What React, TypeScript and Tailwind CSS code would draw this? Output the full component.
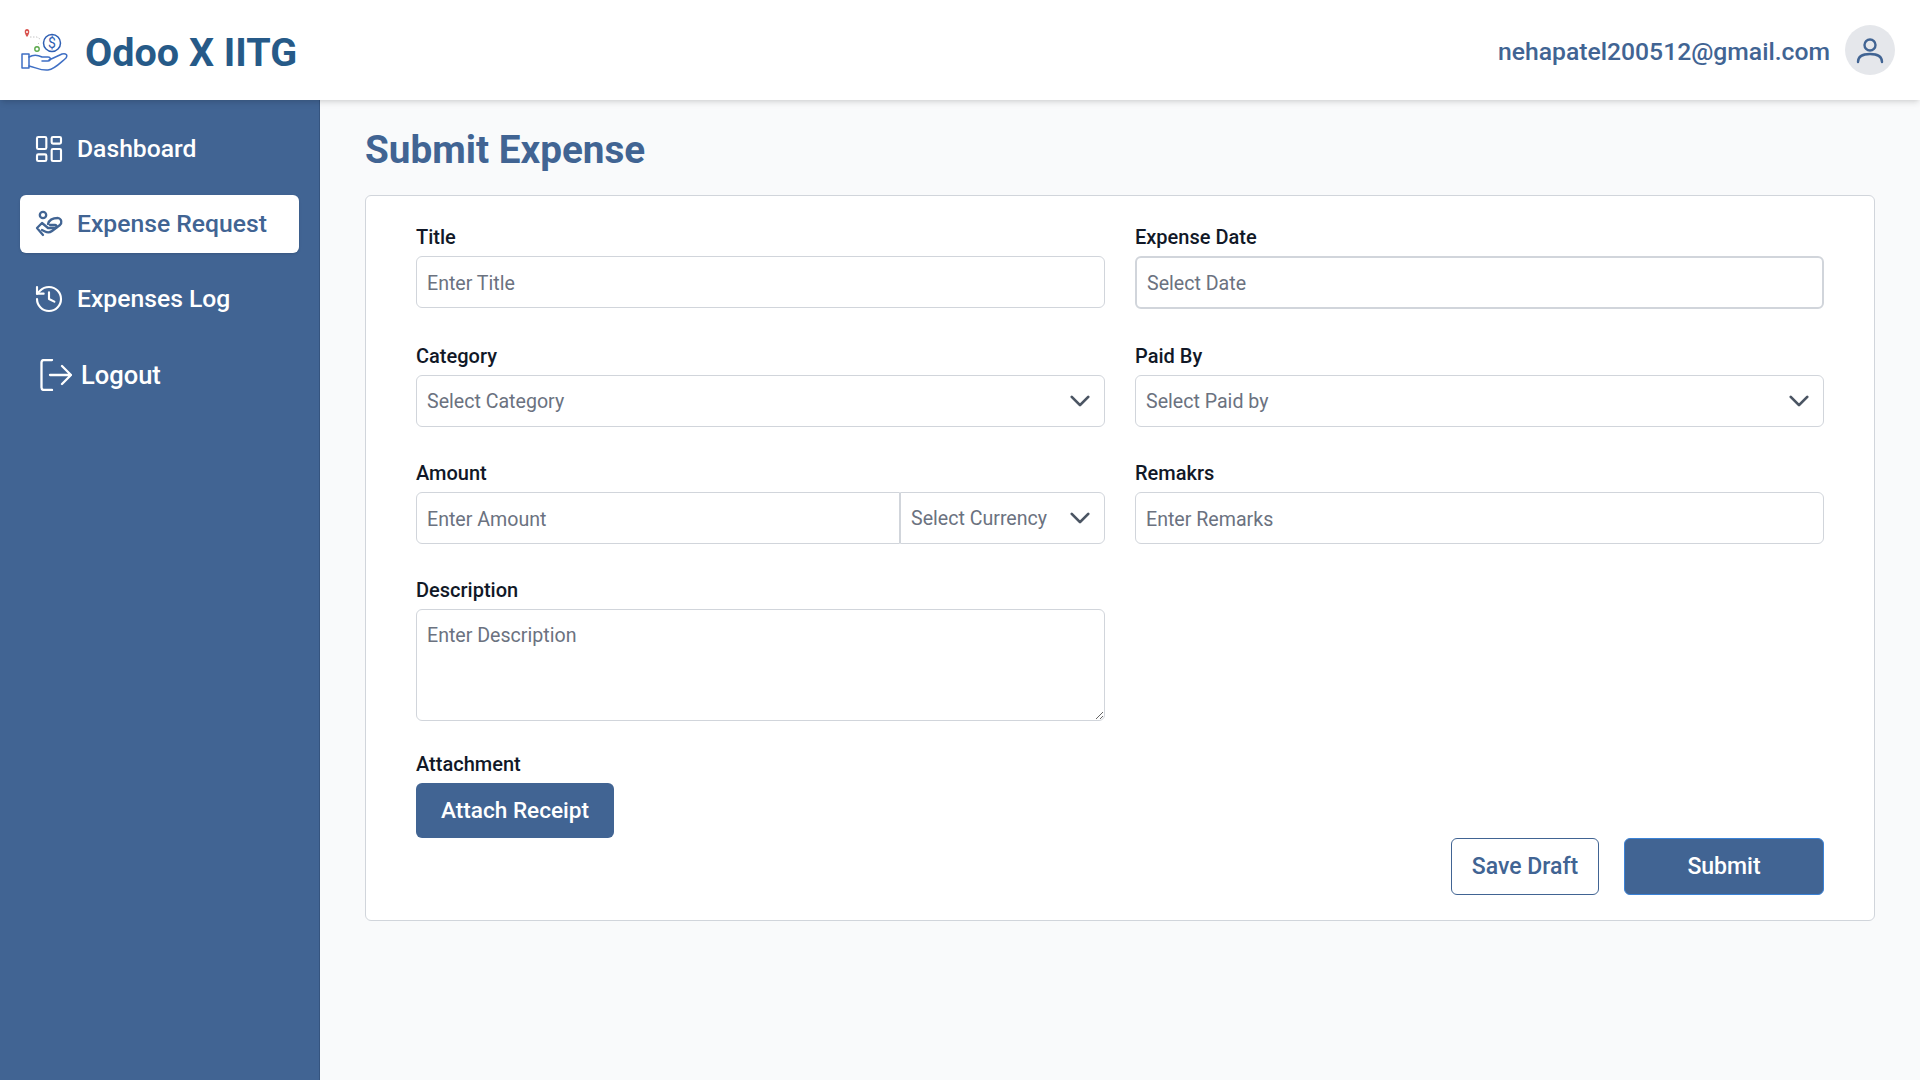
import { History, LayoutDashboard } from 'lucide-react';

const font = { fontFamily: 'Roboto, sans-serif' };

function Logo() {
  return (
    <svg width="48" height="44" viewBox="0 0 48 44" fill="none">
      <path d="M7 9 C4 5.500 4 1 7 1 C10 1 10 5.500 7 9Z" fill="#d9534f" />
      <circle cx="7" cy="4" r="1" fill="#fff" />
      <path d="M10 9 H17 L20 11 M19 15 L17 17" stroke="#b5b5b5" strokeWidth="0.8" strokeDasharray="1.500 1.500" />
      <circle cx="32" cy="15" r="8.500" stroke="#2f5fb3" strokeWidth="1.500" />
      <text x="32" y="20" fontSize="14" fill="#2f5fb3" textAnchor="middle" fontFamily="Roboto">$</text>
      <circle cx="17" cy="21" r="2.200" stroke="#5aa84a" strokeWidth="1.400" />
      <path d="M2 26 H9 V40 H2Z" stroke="#3f6fc4" strokeWidth="1.500" strokeLinejoin="round" />
      <path d="M9 29 C14 26 18 27 22 29 H28 C31 29 31 33 28 33 H22 M29 32 L42 26 C46 25 48 27 46 30 C40 35 35 41 28 42 C21 43 15 39 9 38" stroke="#3f6fc4" strokeWidth="1.500" strokeLinecap="round" strokeLinejoin="round" />
    </svg>
  );
}

function HandIcon() {
  return (
    <svg width="32" height="32" viewBox="0 0 32 32" fill="none" stroke="currentColor" strokeWidth="2.300" strokeLinecap="round" strokeLinejoin="round">
      <circle cx="10" cy="7" r="3.200" />
      <path d="M15 16 C16 12 20 10 25 10 C29 11 29 15 27 17 L19 23 C17 24.500 14 24.500 12 23.500 L9 22" />
      <path d="M17 17 H22 C24 17 24 20 22 20 H15 L9 15 L4 20 L10 27" />
    </svg>
  );
}

function LogoutIcon() {
  return (
    <svg width="32" height="32" viewBox="0 0 32 32" fill="none" stroke="currentColor" strokeWidth="2.300" strokeLinecap="round" strokeLinejoin="round">
      <path d="M12 1 H4 C2.500 1 1.500 2 1.500 3.500 V28.500 C1.500 30 2.500 31 4 31 H12" />
      <path d="M10 16 H31 M22 7 L31 16 L22 25" />
    </svg>
  );
}

function UserIcon() {
  return (
    <svg width="32" height="32" viewBox="0 0 32 32" fill="none" stroke="currentColor" strokeWidth="2.400" strokeLinecap="round">
      <circle cx="16" cy="11" r="5.500" />
      <path d="M4 28 C4 22 9 20 16 20 C23 20 28 22 28 28" />
    </svg>
  );
}

function Chevron() {
  return (
    <svg width="22" height="22" viewBox="0 0 16 16" fill="none" stroke="#4b5563" strokeWidth="2" strokeLinecap="round" strokeLinejoin="round">
      <path d="M2 5 L8 11 L14 5" />
    </svg>
  );
}

function NavItem({ icon, text, active = false, logout = false }: { icon: React.ReactNode; text: string; active?: boolean; logout?: boolean }) {
  return (
    <div
      className={`flex h-[58px] items-center rounded-md font-medium ${logout ? 'mt-[1px] gap-[9px] pl-[20px] text-[25.500px]' : 'gap-[12px] pl-[13px] text-[24.700px]'} ${
        active ? 'bg-white text-[#416493] shadow-sm' : 'text-white'
      }`}
    >
      {icon}
      <span>{text}</span>
    </div>
  );
}

function Field({ label, children }: { label: string; children: React.ReactNode }) {
  return (
    <div className="flex flex-col">
      <label className="mb-[6px] h-[27px] pt-[1px] text-[20px] leading-[27px] font-medium text-[#111827]">{label}</label>
      {children}
    </div>
  );
}

const inputCls = 'h-[52px] w-full rounded-md border border-[#d1d5db] bg-white px-[10px] pt-[2px] text-[19.600px] text-gray-900 outline-none placeholder:text-[#6b7280]';

function SelectBox({ text, className }: { text: string; className: string }) {
  return (
    <div className={`flex h-[52px] items-center justify-between border-[#d1d5db] bg-white pl-[10px] pr-[13px] text-[19.600px] text-[#6b7280] ${className}`}>
      <span className="pt-[2px]">{text}</span>
      <Chevron />
    </div>
  );
}

export default function App() {
  return (
    <div className="flex h-[1080px] w-[1920px] flex-col overflow-hidden bg-[#f9fafb]" style={font}>
      {/* Header */}
      <header className="z-10 flex h-[100px] shrink-0 items-center justify-between bg-white pl-[20px] pr-[25px] shadow-md">
        <div className="flex items-center gap-[17px]">
          <Logo />
          <span className="pt-[5px] text-[39.500px] font-bold text-[#265a88]">Odoo X IITG</span>
        </div>
        <div className="flex items-center gap-[15px]">
          <span className="pt-[4px] text-[24.700px] font-medium text-[#416493]">nehapatel200512@gmail.com</span>
          <div className="flex h-[50px] w-[50px] items-center justify-center rounded-full bg-[#e5e7eb] text-[#416493]">
            <UserIcon />
          </div>
        </div>
      </header>

      <div className="flex min-h-0 flex-1">
        {/* Sidebar */}
        <aside className="flex w-[320px] shrink-0 flex-col gap-[17px] border-r border-[#35547f] bg-[#416493] px-[20px] pt-[20px]">
          <NavItem icon={<LayoutDashboard className="h-[32px] w-[32px]" strokeWidth={1.6} />} text="Dashboard" />
          <NavItem active icon={<HandIcon />} text="Expense Request" />
          <NavItem icon={<History className="h-[32px] w-[32px]" strokeWidth={1.6} />} text="Expenses Log" />
          <NavItem logout icon={<LogoutIcon />} text="Logout" />
        </aside>

        {/* Main */}
        <main className="flex-1 pl-[45px] pr-[45px]">
          <h1 className="mt-[22px] h-[53px] text-[38.700px] leading-[55px] font-bold text-[#416493]">Submit Expense</h1>
          <div className="mt-[20px] h-[726px] rounded-md border border-[#d1d5db] bg-white px-[50px] pt-[27px]">
            <div className="grid grid-cols-2 gap-x-[30px] gap-y-[32px]">
              <Field label="Title">
                <input className={inputCls} placeholder="Enter Title" />
              </Field>
              <Field label="Expense Date">
                <input className={`${inputCls} mb-[1px] h-[53px] border-2`} placeholder="Select Date" />
              </Field>
              <Field label="Category">
                <SelectBox text="Select Category" className="rounded-md border" />
              </Field>
              <Field label="Paid By">
                <SelectBox text="Select Paid by" className="rounded-md border" />
              </Field>
              <Field label="Amount">
                <div className="flex">
                  <input className="h-[52px] min-w-0 flex-1 rounded-l-md border border-[#d1d5db] bg-white px-[10px] pt-[2px] text-[19.600px] outline-none placeholder:text-[#6b7280]" placeholder="Enter Amount" />
                  <SelectBox text="Select Currency" className="w-[205px] rounded-r-md border" />
                </div>
              </Field>
              <Field label="Remakrs">
                <input className={inputCls} placeholder="Enter Remarks" />
              </Field>
              <Field label="Description">
                <textarea className="block h-[112px] w-full rounded-md border border-[#d1d5db] bg-white px-[10px] py-[14px] text-[19.600px] leading-[24px] outline-none placeholder:text-[#6b7280]" placeholder="Enter Description" />
              </Field>
            </div>
            <div className="mt-[29px] pt-[1px] text-[20px] leading-[26px] font-medium text-[#111827]">Attachment</div>
            <div className="mt-[6px] flex items-center">
              <button className="h-[55px] w-[198px] rounded-md bg-[#416493] pt-[1px] text-[22.600px] font-medium text-white">Attach Receipt</button>
            </div>
            <div className="flex justify-end gap-[25px]">
              <button className="h-[57px] w-[148px] rounded-md border border-[#416493] bg-white pt-[2px] text-[23px] font-medium text-[#416493]">Save Draft</button>
              <button className="h-[57px] w-[200px] rounded-md border border-[#3b82d6] bg-[#416493] pt-[2px] text-[23px] font-medium text-white">Submit</button>
            </div>
          </div>
        </main>
      </div>
    </div>
  );
}
